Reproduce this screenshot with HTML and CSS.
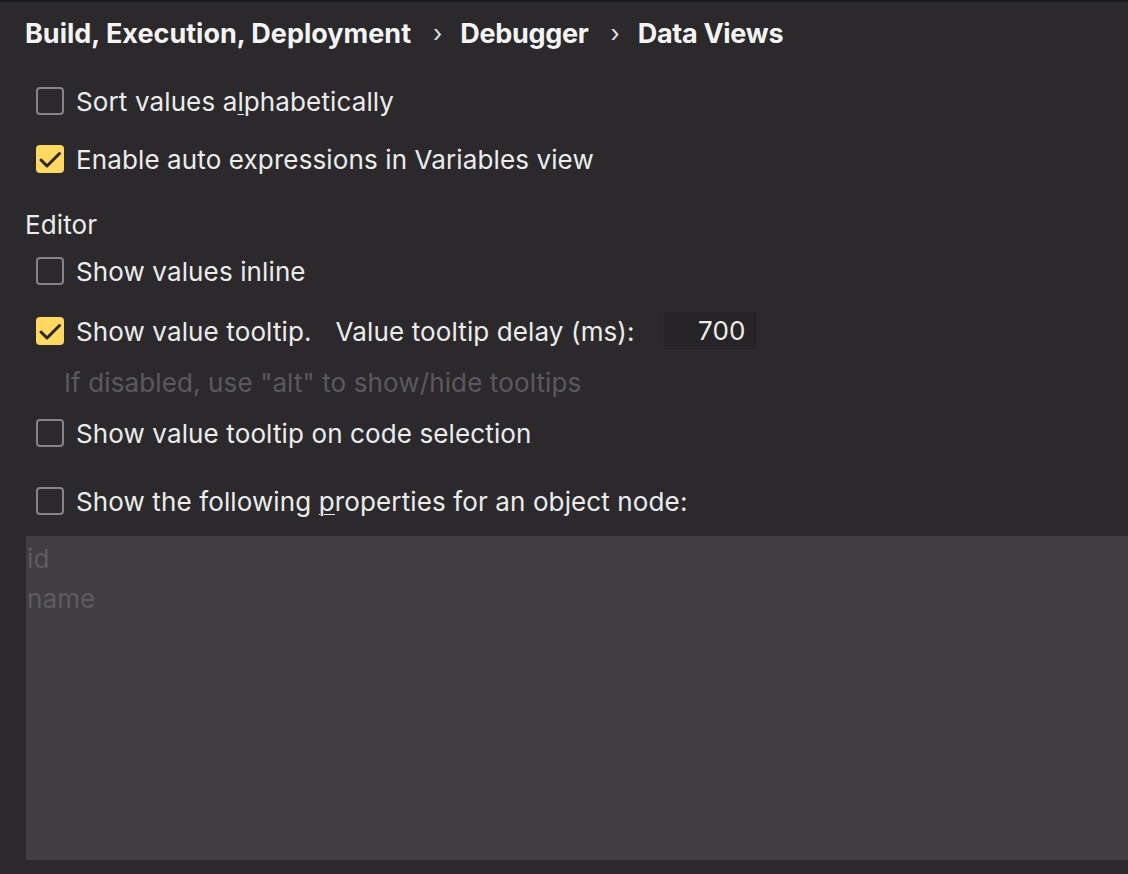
FILE: index.html
```html
<!DOCTYPE html>
<html>
<head>
<meta charset="utf-8">
<link rel="stylesheet" href="styles.css">
</head>
<body>
<div class="page">
  <div class="title">
    <span>Build, Execution, Deployment</span>
    <span class="sep">›</span>
    <span class="tight">Debugger</span>
    <span class="sep">›</span>
    <span class="tight">Data Views</span>
  </div>

  <div class="row r1">
    <span class="cb"></span>
    <span class="label">Sort values a<u>l</u>phabetically</span>
  </div>
  <div class="row r2">
    <span class="cb checked"><svg viewBox="0 0 28 28" width="28" height="28"><path d="M5 15 L11 21 L23.5 8.5" fill="none" stroke="#2a282b" stroke-width="3" stroke-linecap="round" stroke-linejoin="round"/></svg></span>
    <span class="label">Enable auto expressions in Variables view</span>
  </div>

  <div class="section">Editor</div>

  <div class="row r3">
    <span class="cb"></span>
    <span class="label">Show values inline</span>
  </div>
  <div class="row r4">
    <span class="cb checked"><svg viewBox="0 0 28 28" width="28" height="28"><path d="M5 15 L11 21 L23.5 8.5" fill="none" stroke="#2a282b" stroke-width="3" stroke-linecap="round" stroke-linejoin="round"/></svg></span>
    <span class="label">Show value tooltip.</span>
    <span class="label second">Value tooltip delay (ms):</span>
    <span class="field">700</span>
  </div>
  <div class="hint">If disabled, use "alt" to show/hide tooltips</div>
  <div class="row r5">
    <span class="cb"></span>
    <span class="label">Show value tooltip on code selection</span>
  </div>
  <div class="row r6">
    <span class="cb"></span>
    <span class="label">Show the following <u>p</u>roperties for an object node:</span>
  </div>

  <div class="area">
    <div class="item">id</div>
    <div class="item">name</div>
  </div>
</div>
</body>
</html>
```

FILE: styles.css
```css
html, body {
  margin: 0;
  padding: 0;
  background: #2b292c;
  height: 100%;
  overflow: hidden;
}
.page {
  border-top: 2px solid #1b1a1c;
  padding-left: 25px;
  font-family: Inter, "Noto Sans", sans-serif;
  font-size: 26px;
  letter-spacing: 0.12px;
  color: #ececec;
}
.title {
  height: 64px;
  line-height: 64px;
  font-weight: 700;
  font-size: 27px;
  letter-spacing: 0;
  display: flex;
  color: #f4f4f4;
}
.title .sep {
  font-weight: 400;
  font-size: 24px;
  margin: 0 18px 0 22px;
  color: #e0e0e0;
}
.title .tight {
  letter-spacing: -0.3px;
}
.row {
  height: 40px;
  display: flex;
  align-items: center;
  padding-left: 11px;
}
.r1 { margin-top: 15px; }
.r2 { margin-top: 18px; }
.section {
  height: 40px;
  line-height: 40px;
  margin-top: 26px;
}
.r3 { margin-top: 6px; }
.r4 { margin-top: 20px; }
.hint {
  height: 40px;
  line-height: 40px;
  margin-top: 12px;
  padding-left: 39px;
  color: #5b595d;
}
.r5 { margin-top: 10px; }
.r6 { margin-top: 28px; }
.cb {
  box-sizing: border-box;
  width: 28px;
  height: 28px;
  border: 2px solid #858386;
  border-radius: 4px;
  flex: none;
  margin-right: 12px;
}
.cb.checked {
  border: none;
  background: #ffd862;
}
.cb svg { display: block; }
.label u {
  text-decoration-thickness: 1px;
  text-underline-offset: 3px;
}
.second { margin-left: 24px; }
.field {
  box-sizing: border-box;
  margin-left: 28px;
  width: 95px;
  height: 40px;
  line-height: 38px;
  background: #262427;
  border: 1px solid #2e2c30;
  text-align: right;
  padding-right: 11px;
}
.area {
  margin-top: 15px;
  margin-left: 1px;
  height: 324px;
  background: #403e41;
  padding-top: 3px;
  padding-left: 1px;
  box-sizing: border-box;
}
.item {
  height: 40px;
  line-height: 40px;
  color: #5e5c60;
}
```
